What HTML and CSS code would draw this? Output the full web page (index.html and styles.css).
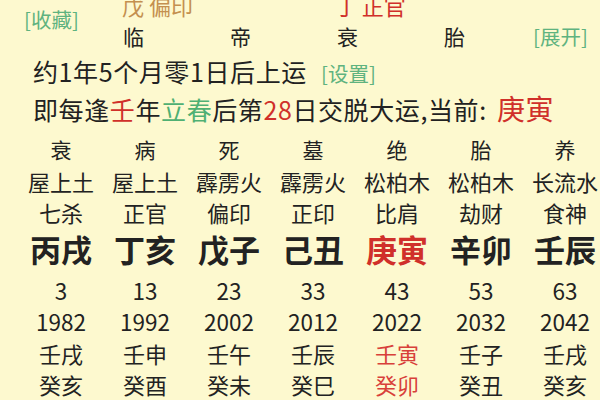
FILE: index.html
```html
<!DOCTYPE html>
<html lang="zh-CN">
<head>
<meta charset="utf-8">
<link rel="stylesheet" href="styles.css">
</head>
<body>
<div class="page">
  <div class="head">
    <div class="fav">[收藏]</div>
    <div class="pillars">
      <div class="prow top">
        <span class="brown">戊 偏印</span>
        <span class="red">丁 正官</span>
      </div>
      <div class="prow states">
        <span>临</span><span>帝</span><span>衰</span><span>胎</span>
      </div>
    </div>
    <div class="expand">[展开]</div>
  </div>
  <div class="line l1">约1年5个月零1日后上运 <span class="btn">[设置]</span></div>
  <div class="line l2">即每逢<span class="red">壬</span>年<span class="green">立春</span>后第<span class="red">28</span>日交脱大运,当前: <span class="cur">庚寅</span></div>
  <div class="grid">
    <div class="r s">衰</div><div class="r s">病</div><div class="r s">死</div><div class="r s">墓</div><div class="r s">绝</div><div class="r s">胎</div><div class="r s">养</div>
    <div class="r">屋上土</div><div class="r">屋上土</div><div class="r">霹雳火</div><div class="r">霹雳火</div><div class="r">松柏木</div><div class="r">松柏木</div><div class="r">长流水</div>
    <div class="r">七杀</div><div class="r">正官</div><div class="r">偏印</div><div class="r">正印</div><div class="r">比肩</div><div class="r">劫财</div><div class="r">食神</div>
    <div class="r big">丙戌</div><div class="r big">丁亥</div><div class="r big">戊子</div><div class="r big">己丑</div><div class="r big red">庚寅</div><div class="r big">辛卯</div><div class="r big">壬辰</div>
    <div class="r n first">3</div><div class="r n first">13</div><div class="r n first">23</div><div class="r n first">33</div><div class="r n first">43</div><div class="r n first">53</div><div class="r n first">63</div>
    <div class="r n">1982</div><div class="r n">1992</div><div class="r n">2002</div><div class="r n">2012</div><div class="r n">2022</div><div class="r n">2032</div><div class="r n">2042</div>
    <div class="r">壬戌</div><div class="r">壬申</div><div class="r">壬午</div><div class="r">壬辰</div><div class="r lred">壬寅</div><div class="r">壬子</div><div class="r">壬戌</div>
    <div class="r">癸亥</div><div class="r">癸酉</div><div class="r">癸未</div><div class="r">癸巳</div><div class="r lred">癸卯</div><div class="r">癸丑</div><div class="r">癸亥</div>
  </div>
</div>
</body>
</html>
```

FILE: styles.css
```css
html, body {
  margin: 0;
  padding: 0;
}
body {
  width: 600px;
  height: 400px;
  overflow: hidden;
  background: #fdf9cf;
  color: #222;
  font-family: "Noto Sans CJK SC", "Noto Sans", sans-serif;
}
.page {
  width: 600px;
}
.head {
  display: flex;
  margin-top: -8px;
  height: 57px;
}
.fav {
  width: 80px;
  padding-left: 24px;
  box-sizing: border-box;
  font-size: 20.5px;
  line-height: 24px;
  padding-top: 15px;
  white-space: nowrap;
  color: #5fb37f;
}
.pillars {
  width: 430px;
  display: flex;
  flex-direction: column;
}
.prow {
  display: grid;
  grid-template-columns: repeat(4, 107px);
}
.prow.top {
  font-size: 22px;
  line-height: 26px;
  height: 26px;
  display: flex;
  padding-left: 42px;
  gap: 142px;
}
.prow.states {
  margin-top: 5px;
  font-size: 21px;
  line-height: 26px;
  text-align: center;
}
.brown { color: #c4904f; }
.red { color: #d0302a; }
.green { color: #4fb073; }
.lred { color: #d8403a; }
.expand {
  font-size: 20.5px;
  line-height: 24px;
  padding-top: 32px;
  padding-left: 23px;
  white-space: nowrap;
  color: #5fb37f;
}
.line {
  padding-left: 33px;
  font-size: 25px;
  line-height: 35px;
  letter-spacing: 0.6px;
  white-space: nowrap;
}
.l1 {
  margin-top: 5px;
}
.btn {
  font-size: 20.5px;
  color: #5fb37f;
  margin-left: 8px;
  letter-spacing: 0;
}
.cur {
  font-size: 28px;
  margin-left: 4px;
  color: #d0302a;
}
.grid {
  margin-top: 7px;
  padding-left: 19px;
  display: grid;
  grid-template-columns: repeat(7, 84px);
  width: 588px;
}
.r {
  text-align: center;
  font-size: 22px;
  line-height: 31.5px;
  white-space: nowrap;
}
.r.s {
  font-size: 21px;
}
.r.big {
  font-size: 31px;
  font-weight: bold;
  line-height: 40px;
  padding-top: 0;
}
.r.n {
  font-size: 22.5px;
}
.r.first {
  margin-top: 6px;
}
```
